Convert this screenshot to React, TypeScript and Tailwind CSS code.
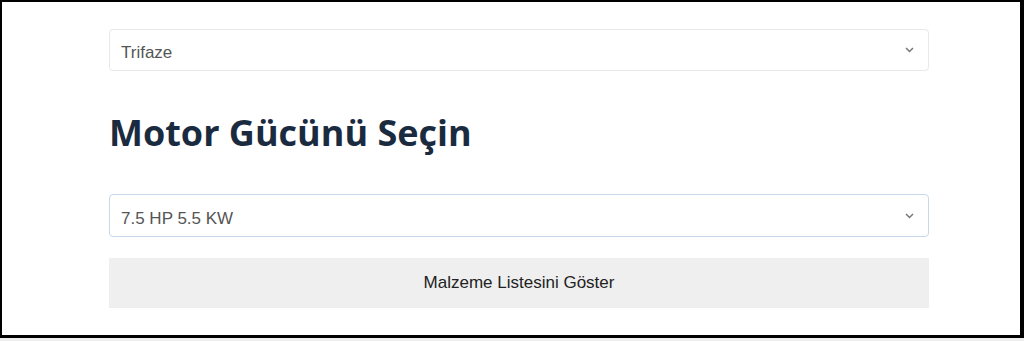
import React from "react";

// Small chevron used by the native-looking selects
const Chevron: React.FC = () => (
  <svg
    width="9"
    height="6"
    viewBox="0 0 9 6"
    className="absolute right-[14px] top-1/2 -translate-y-1/2"
  >
    <polyline points="1,1 4.5,4.5 8,1" fill="none" stroke="#777" strokeWidth="1.5" />
  </svg>
);

const SelectBox: React.FC<{ value: string; focused?: boolean; className?: string }> = ({
  value,
  focused,
  className,
}) => (
  <div
    className={
      "relative flex items-center rounded-[4px] border bg-white pl-[11px] pt-[6px] text-[17px] text-[#555] " +
      (focused ? "border-[#c7d7ec] " : "border-[#e8e8e8] ") +
      (className ?? "")
    }
  >
    <span>{value}</span>
    <Chevron />
  </div>
);

export default function App() {
  return (
    <div
      className="h-[341px] w-[1024px] bg-[#eeeeee]"
      style={{ fontFamily: '"Liberation Sans", Arial, sans-serif' }}
    >
      <div className="h-[338px] border-b-[3px] border-l-2 border-r-4 border-t-2 border-black bg-white">
        <div className="ml-[107px] flex w-[820px] flex-col pt-[27px]">
          <SelectBox value="Trifaze" className="h-[42px]" />

          <h1
            className="mb-[39px] mt-[39px] text-[36px] font-bold leading-[45px] text-[#1b2b3f]"
            style={{ fontFamily: '"Open Sans", "Noto Sans", sans-serif' }}
          >
            Motor Gücünü Seçin
          </h1>

          <SelectBox value="7.5 HP 5.5 KW" focused className="h-[43px]" />

          <button className="mt-[21px] h-[50px] w-full bg-[#efefef] text-[17px] text-[#222]">
            Malzeme Listesini Göster
          </button>
        </div>
      </div>
    </div>
  );
}
